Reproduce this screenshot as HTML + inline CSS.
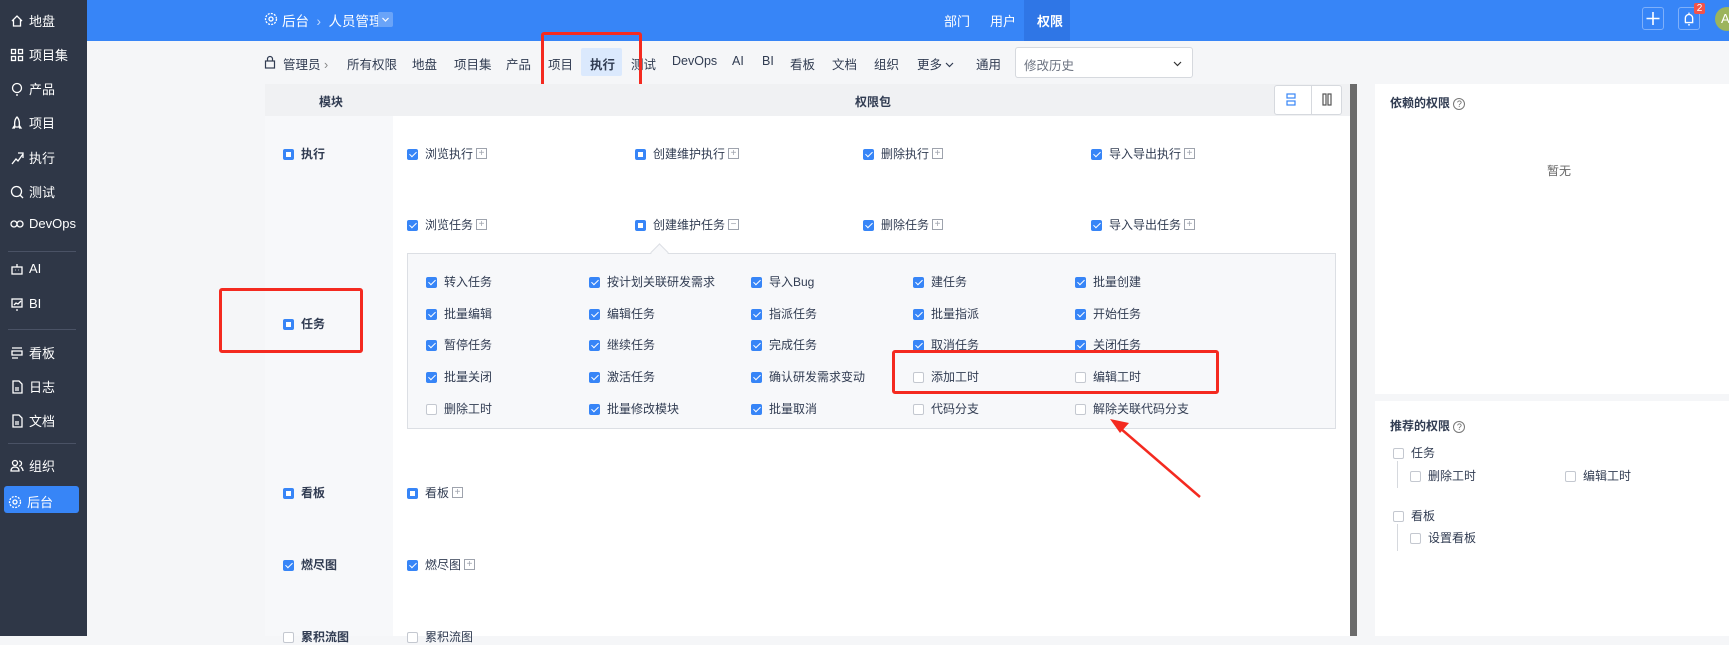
<!DOCTYPE html>
<html><head><meta charset="utf-8">
<style>
*{margin:0;padding:0;box-sizing:border-box}
body{width:1729px;height:636px;overflow:hidden;background:#f5f6f8;font-family:"Liberation Sans","Noto Sans CJK SC",sans-serif;font-size:12px;color:#313c52;position:relative}
.a{position:absolute;white-space:nowrap}
#side{position:absolute;left:0;top:0;width:87px;height:636px;background:#2f3747}
.si{position:absolute;left:10px;color:#fff;font-size:13px;display:flex;align-items:center;gap:5px}
.si svg{width:14px;height:14px}
.hr{position:absolute;left:8px;width:68px;height:1px;background:#4a5265}
#top{position:absolute;left:87px;top:0;width:1642px;height:41px;background:#3785f7}
.cb{position:absolute;width:11px;height:11px;border-radius:2px;background:#3785f7}
.cb.k::after{content:"";position:absolute;left:3.5px;top:1px;width:3px;height:6px;border:solid #fff;border-width:0 1.5px 1.5px 0;transform:rotate(45deg)}
.cb.p::after{content:"";position:absolute;left:3px;top:3px;width:5px;height:5px;background:#fff}
.cb.e{background:#fff;border:1px solid #c4c8d0}
.pl{display:inline-block;vertical-align:middle;margin-left:3px;width:11px;height:11px;border:1px solid #9ea3ad;color:#9ea3ad;font-size:10px;line-height:9px;text-align:center;margin-top:-2px}
.red{position:absolute;border:3px solid #f42a20;border-radius:3px}
.tb{position:absolute;top:54px;font-size:12.5px}
</style></head><body>
<div id="side">
<div class="si" style="top:11px"><svg viewBox="0 0 14 14" fill="none" stroke="#fff" stroke-width="1.3"><path d="M2 7L7 2l5 5M3.5 6v6h7V6"/></svg>地盘</div>
<div class="si" style="top:45px"><svg viewBox="0 0 14 14" fill="none" stroke="#fff" stroke-width="1.3"><rect x="1.5" y="1.5" width="4" height="4"/><rect x="8.5" y="1.5" width="4" height="4"/><rect x="1.5" y="8.5" width="4" height="4"/><rect x="8.5" y="8.5" width="4" height="4"/></svg>项目集</div>
<div class="si" style="top:79px"><svg viewBox="0 0 14 14" fill="none" stroke="#fff" stroke-width="1.3"><circle cx="7" cy="6" r="4.5"/><path d="M6 13h2"/></svg>产品</div>
<div class="si" style="top:113px"><svg viewBox="0 0 14 14" fill="none" stroke="#fff" stroke-width="1.3"><path d="M7 1c2 2 3 5 2 10H5C4 6 5 3 7 1zM5 9l-2 3h2M9 9l2 3H9"/></svg>项目</div>
<div class="si" style="top:148px"><svg viewBox="0 0 14 14" fill="none" stroke="#fff" stroke-width="1.3"><path d="M2 13l4-5 2 2 5-7M8 2h5v5"/></svg>执行</div>
<div class="si" style="top:182px"><svg viewBox="0 0 14 14" fill="none" stroke="#fff" stroke-width="1.3"><circle cx="6.5" cy="6.5" r="5"/><path d="M10 10l3 3"/></svg>测试</div>
<div class="si" style="top:216px"><svg viewBox="0 0 14 14" fill="none" stroke="#fff" stroke-width="1.3"><circle cx="4" cy="7" r="3"/><circle cx="10" cy="7" r="3"/></svg>DevOps</div>
<div class="hr" style="top:251px"></div>
<div class="si" style="top:261px"><svg viewBox="0 0 14 14" fill="none" stroke="#fff" stroke-width="1.3"><rect x="2" y="5" width="10" height="7"/><path d="M7 2v3M5 8h.5M8.5 8h.5"/></svg>AI</div>
<div class="si" style="top:296px"><svg viewBox="0 0 14 14" fill="none" stroke="#fff" stroke-width="1.3"><rect x="2" y="2" width="10" height="8"/><path d="M4 8l2-2 2 1 3-3M6 13h2"/></svg>BI</div>
<div class="hr" style="top:329px"></div>
<div class="si" style="top:343px"><svg viewBox="0 0 14 14" fill="none" stroke="#fff" stroke-width="1.3"><path d="M2 2h10M2 5h10v4H2zM2 12h6"/></svg>看板</div>
<div class="si" style="top:377px"><svg viewBox="0 0 14 14" fill="none" stroke="#fff" stroke-width="1.3"><path d="M3 1h6l3 3v9H3zM5 8h4M5 10h4"/></svg>日志</div>
<div class="si" style="top:411px"><svg viewBox="0 0 14 14" fill="none" stroke="#fff" stroke-width="1.3"><path d="M3 1h6l3 3v9H3zM5 8h4M5 10h4"/></svg>文档</div>
<div class="hr" style="top:443px"></div>
<div class="si" style="top:456px"><svg viewBox="0 0 14 14" fill="none" stroke="#fff" stroke-width="1.3"><circle cx="5" cy="4" r="2.5"/><path d="M1 12c0-3 2-4 4-4s4 1 4 4zM9 2a2.5 2.5 0 010 5M11 8c1 1 2 2 2 4"/></svg>组织</div>
<div style="position:absolute;left:4px;top:486px;width:75px;height:27px;background:#3785f7;border-radius:3px"></div>
<div class="si" style="top:492px;left:8px"><svg viewBox="0 0 14 14" fill="none" stroke="#fff" stroke-width="1.3"><circle cx="7" cy="7" r="2"/><circle cx="7" cy="7" r="5.5" stroke-dasharray="2 1.2"/></svg>后台</div>
</div>
<div id="top"></div>
<svg class="a" style="left:264px;top:12px" width="14" height="14" fill="none" stroke="#fff" stroke-width="1.3"><circle cx="7" cy="7" r="2"/><circle cx="7" cy="7" r="5.5" stroke-dasharray="2 1.2"/></svg>
<div class="a" style="left:282px;top:10px;color:#fff;font-size:13.5px">后台 &nbsp;<span style="opacity:.7">›</span>&nbsp; 人员管理</div>
<div class="a" style="left:378px;top:12px;width:15px;height:15px;background:#6aa4f8;border-radius:2px"><svg width="15" height="15" fill="none" stroke="#fff" stroke-width="1.2"><path d="M4.5 6l3 3 3-3"/></svg></div>
<div style="position:absolute;left:1024px;top:0;width:46px;height:41px;background:#2f76e6"></div>
<div class="a" style="left:944px;top:11px;color:#fff;font-size:13px">部门</div>
<div class="a" style="left:990px;top:11px;color:#fff;font-size:13px">用户</div>
<div class="a" style="left:1037px;top:11px;color:#fff;font-weight:bold;font-size:13px">权限</div>
<div class="a" style="left:1642px;top:7px;width:22px;height:23px;border:1px solid #7fb0fa;border-radius:3px"><svg width="20" height="21" stroke="#fff" stroke-width="1.6"><path d="M10 4v13M3.5 10.5h13"/></svg></div>
<div class="a" style="left:1678px;top:7px;width:22px;height:23px;border:1px solid #7fb0fa;border-radius:3px"><svg viewBox="0 0 22 23" width="20" height="21" fill="none" stroke="#fff" stroke-width="1.5"><path d="M7 16V11a4 4 0 018 0v5H6.5h9M10 18.5h2M11 5v2"/></svg></div>
<div class="a" style="left:1694px;top:3px;width:11px;height:11px;background:#f2534a;border-radius:2px;color:#fff;font-size:10px;line-height:11px;text-align:center">2</div>
<div class="a" style="left:1715px;top:7px;width:24px;height:24px;border-radius:12px;background:#9cb45c;color:#fff;font-size:13px;line-height:24px;padding-left:6px">A</div>

<!-- toolbar -->
<div style="position:absolute;left:581px;top:48px;width:41px;height:28px;background:#dbe9fd;border-radius:2px"></div>
<svg class="a" style="left:264px;top:55px" width="12" height="14" fill="none" stroke="#313c52" stroke-width="1.2"><rect x="1.5" y="6" width="9" height="7"/><path d="M3.5 6V4a2.5 2.5 0 015 0v2"/></svg>
<div class="tb" style="left:283px">管理员 <span style="color:#888">›</span></div>
<div class="tb" style="left:347px">所有权限</div>
<div class="tb" style="left:412px">地盘</div>
<div class="tb" style="left:454px">项目集</div>
<div class="tb" style="left:506px">产品</div>
<div class="tb" style="left:548px">项目</div>
<div class="tb" style="left:590px;font-weight:bold">执行</div>
<div class="tb" style="left:631px">测试</div>
<div class="tb" style="left:672px">DevOps</div>
<div class="tb" style="left:732px">AI</div>
<div class="tb" style="left:762px">BI</div>
<div class="tb" style="left:790px">看板</div>
<div class="tb" style="left:832px">文档</div>
<div class="tb" style="left:874px">组织</div>
<div class="tb" style="left:917px">更多 <svg width="9" height="8" fill="none" stroke="#313c52" stroke-width="1.2"><path d="M1 2l3.5 3.5L8 2"/></svg></div>
<div class="tb" style="left:976px">通用</div>
<div class="a" style="left:1015px;top:47px;width:178px;height:31px;background:#fff;border:1px solid #d6d9de;border-radius:3px;color:#6b7280;padding:7px 8px;font-size:12.5px">修改历史<svg style="position:absolute;right:10px;top:12px" width="9" height="8" fill="none" stroke="#333" stroke-width="1.2"><path d="M1 2l3.5 3.5L8 2"/></svg></div>
<div class="red" style="left:541px;top:32px;width:101px;height:63px"></div>

<!-- table -->
<div style="position:absolute;left:265px;top:84px;width:1085px;height:552px;background:#fff"></div>
<div style="position:absolute;left:265px;top:84px;width:1085px;height:32px;background:#f0f1f3"></div>
<div style="position:absolute;left:265px;top:116px;width:128px;height:520px;background:#f7f8fa"></div>
<div style="position:absolute;left:1350px;top:84px;width:7px;height:552px;background:#6b6b6b"></div>
<div class="a" style="left:319px;top:93px;font-weight:bold">模块</div>
<div class="a" style="left:855px;top:93px;font-weight:bold">权限包</div>
<div class="a" style="left:1274px;top:85px;width:68px;height:30px;background:#fff;border:1px solid #d6d9de;border-radius:3px"></div>
<div style="position:absolute;left:1311px;top:85px;width:1px;height:30px;background:#d6d9de"></div>
<svg class="a" style="left:1286px;top:93px" width="10" height="13" fill="none" stroke="#3785f7" stroke-width="1.2"><rect x="1" y="1" width="8" height="4"/><rect x="1" y="8" width="8" height="4"/></svg>
<svg class="a" style="left:1322px;top:93px" width="10" height="13" fill="none" stroke="#555" stroke-width="1.2"><rect x="1" y="1" width="3" height="11"/><rect x="6" y="1" width="3" height="11"/></svg>

<div class="cb p" style="left:283px;top:149px"></div><div class="a" style="left:301px;top:145px;font-weight:bold">执行</div>
<div class="cb p" style="left:283px;top:319px"></div><div class="a" style="left:301px;top:315px;font-weight:bold">任务</div>
<div class="cb p" style="left:283px;top:488px"></div><div class="a" style="left:301px;top:484px;font-weight:bold">看板</div>
<div class="cb k" style="left:283px;top:560px"></div><div class="a" style="left:301px;top:556px;font-weight:bold">燃尽图</div>
<div class="cb e" style="left:283px;top:632px"></div><div class="a" style="left:301px;top:628px;font-weight:bold">累积流图</div>

<div class="cb k" style="left:407px;top:149px"></div><div class="a" style="left:425px;top:145px">浏览执行<span class="pl">+</span></div>
<div class="cb p" style="left:635px;top:149px"></div><div class="a" style="left:653px;top:145px">创建维护执行<span class="pl">+</span></div>
<div class="cb k" style="left:863px;top:149px"></div><div class="a" style="left:881px;top:145px">删除执行<span class="pl">+</span></div>
<div class="cb k" style="left:1091px;top:149px"></div><div class="a" style="left:1109px;top:145px">导入导出执行<span class="pl">+</span></div>

<div class="cb k" style="left:407px;top:220px"></div><div class="a" style="left:425px;top:216px">浏览任务<span class="pl">+</span></div>
<div class="cb p" style="left:635px;top:220px"></div><div class="a" style="left:653px;top:216px">创建维护任务<span class="pl">−</span></div>
<div class="cb k" style="left:863px;top:220px"></div><div class="a" style="left:881px;top:216px">删除任务<span class="pl">+</span></div>
<div class="cb k" style="left:1091px;top:220px"></div><div class="a" style="left:1109px;top:216px">导入导出任务<span class="pl">+</span></div>

<div style="position:absolute;left:407px;top:253px;width:929px;height:176px;background:#f7f8fa;border:1px solid #dcdfe4"></div>
<div style="position:absolute;left:653px;top:246px;width:13px;height:13px;background:#f7f8fa;border-left:1px solid #dcdfe4;border-top:1px solid #dcdfe4;transform:rotate(45deg)"></div>

<div class="cb k" style="left:426px;top:277px"></div><div class="a" style="left:444px;top:273px">转入任务</div>
<div class="cb k" style="left:589px;top:277px"></div><div class="a" style="left:607px;top:273px">按计划关联研发需求</div>
<div class="cb k" style="left:751px;top:277px"></div><div class="a" style="left:769px;top:273px">导入Bug</div>
<div class="cb k" style="left:913px;top:277px"></div><div class="a" style="left:931px;top:273px">建任务</div>
<div class="cb k" style="left:1075px;top:277px"></div><div class="a" style="left:1093px;top:273px">批量创建</div>

<div class="cb k" style="left:426px;top:309px"></div><div class="a" style="left:444px;top:305px">批量编辑</div>
<div class="cb k" style="left:589px;top:309px"></div><div class="a" style="left:607px;top:305px">编辑任务</div>
<div class="cb k" style="left:751px;top:309px"></div><div class="a" style="left:769px;top:305px">指派任务</div>
<div class="cb k" style="left:913px;top:309px"></div><div class="a" style="left:931px;top:305px">批量指派</div>
<div class="cb k" style="left:1075px;top:309px"></div><div class="a" style="left:1093px;top:305px">开始任务</div>

<div class="cb k" style="left:426px;top:340px"></div><div class="a" style="left:444px;top:336px">暂停任务</div>
<div class="cb k" style="left:589px;top:340px"></div><div class="a" style="left:607px;top:336px">继续任务</div>
<div class="cb k" style="left:751px;top:340px"></div><div class="a" style="left:769px;top:336px">完成任务</div>
<div class="cb k" style="left:913px;top:340px"></div><div class="a" style="left:931px;top:336px">取消任务</div>
<div class="cb k" style="left:1075px;top:340px"></div><div class="a" style="left:1093px;top:336px">关闭任务</div>

<div class="cb k" style="left:426px;top:372px"></div><div class="a" style="left:444px;top:368px">批量关闭</div>
<div class="cb k" style="left:589px;top:372px"></div><div class="a" style="left:607px;top:368px">激活任务</div>
<div class="cb k" style="left:751px;top:372px"></div><div class="a" style="left:769px;top:368px">确认研发需求变动</div>
<div class="cb e" style="left:913px;top:372px"></div><div class="a" style="left:931px;top:368px">添加工时</div>
<div class="cb e" style="left:1075px;top:372px"></div><div class="a" style="left:1093px;top:368px">编辑工时</div>

<div class="cb e" style="left:426px;top:404px"></div><div class="a" style="left:444px;top:400px">删除工时</div>
<div class="cb k" style="left:589px;top:404px"></div><div class="a" style="left:607px;top:400px">批量修改模块</div>
<div class="cb k" style="left:751px;top:404px"></div><div class="a" style="left:769px;top:400px">批量取消</div>
<div class="cb e" style="left:913px;top:404px"></div><div class="a" style="left:931px;top:400px">代码分支</div>
<div class="cb e" style="left:1075px;top:404px"></div><div class="a" style="left:1093px;top:400px">解除关联代码分支</div>

<div class="cb p" style="left:407px;top:488px"></div><div class="a" style="left:425px;top:484px">看板<span class="pl">+</span></div>
<div class="cb k" style="left:407px;top:560px"></div><div class="a" style="left:425px;top:556px">燃尽图<span class="pl">+</span></div>
<div class="cb e" style="left:407px;top:632px"></div><div class="a" style="left:425px;top:628px">累积流图</div>

<div class="red" style="left:219px;top:288px;width:144px;height:65px"></div>
<div class="red" style="left:892px;top:350px;width:327px;height:44px"></div>
<svg class="a" style="left:0;top:0" width="1729" height="636"><path d="M1200 497L1120 428" stroke="#f42a20" stroke-width="2.5"/><path d="M1110 419l19 4-9 10z" fill="#f42a20"/></svg>

<!-- right panels -->
<div style="position:absolute;left:1375px;top:84px;width:354px;height:310px;background:#fff"></div>
<div style="position:absolute;left:1375px;top:401px;width:354px;height:235px;background:#fff"></div>
<div class="a" style="left:1390px;top:94px;font-weight:bold;font-size:12px">依赖的权限 <span style="display:inline-block;width:12px;height:12px;border:1px solid #777;border-radius:50%;font-size:9px;line-height:10px;text-align:center;font-weight:normal;color:#666">?</span></div>
<div class="a" style="left:1547px;top:162px;color:#666;font-size:12px">暂无</div>
<div class="a" style="left:1390px;top:417px;font-weight:bold;font-size:12px">推荐的权限 <span style="display:inline-block;width:12px;height:12px;border:1px solid #777;border-radius:50%;font-size:9px;line-height:10px;text-align:center;font-weight:normal;color:#666">?</span></div>
<div class="cb e" style="left:1393px;top:448px"></div><div class="a" style="left:1411px;top:444px;font-size:12px">任务</div>
<div style="position:absolute;left:1397px;top:461px;width:1px;height:27px;background:#d6d9de"></div>
<div class="cb e" style="left:1410px;top:471px"></div><div class="a" style="left:1428px;top:467px;font-size:12px">删除工时</div>
<div class="cb e" style="left:1565px;top:471px"></div><div class="a" style="left:1583px;top:467px;font-size:12px">编辑工时</div>
<div class="cb e" style="left:1393px;top:511px"></div><div class="a" style="left:1411px;top:507px;font-size:12px">看板</div>
<div style="position:absolute;left:1397px;top:524px;width:1px;height:27px;background:#d6d9de"></div>
<div class="cb e" style="left:1410px;top:533px"></div><div class="a" style="left:1428px;top:529px;font-size:12px">设置看板</div>
</body></html>
